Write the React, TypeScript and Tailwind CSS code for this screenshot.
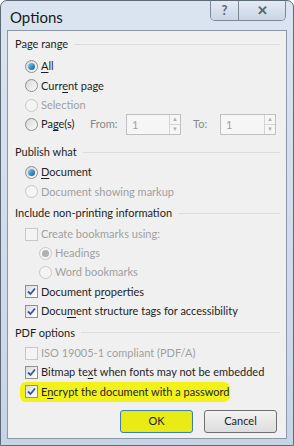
import type { ReactNode } from 'react';

const font = { fontFamily: 'Lato, "Open Sans", sans-serif' };

function Radio({ checked, disabled }: { checked?: boolean; disabled?: boolean }) {
  return (
    <span
      className={`relative inline-flex h-[13px] w-[13px] shrink-0 items-center justify-center rounded-full border ${
        disabled ? 'border-[#c8c8c8] bg-[#f4f4f4]' : 'border-[#8e8f8f] bg-gradient-to-br from-[#d8d8d8] to-[#fbfbfb]'
      }`}
    >
      {checked && (
        <span
          className={`h-[7px] w-[7px] rounded-full ${
            disabled ? 'bg-[#b0b0b0]' : 'bg-gradient-to-br from-[#7fd0ff] to-[#0b5a8f]'
          }`}
        />
      )}
    </span>
  );
}

function Check({ checked, disabled }: { checked?: boolean; disabled?: boolean }) {
  return (
    <span
      className={`inline-flex h-[13px] w-[13px] shrink-0 items-center justify-center border ${
        disabled ? 'border-[#c8c8c8] bg-[#f4f4f4]' : 'border-[#8e8f8f] bg-gradient-to-br from-[#dcdcdc] to-[#ffffff]'
      }`}
    >
      {checked && (
        <svg width="9" height="9" viewBox="0 0 9 9">
          <path d="M1 4.5 L3.5 7 L8 1.5" fill="none" stroke="#3a55a0" strokeWidth="1.8" />
        </svg>
      )}
    </span>
  );
}

function Row({ indent = 'pl-[10px]', disabled, children, control }: { indent?: string; disabled?: boolean; children: ReactNode; control: ReactNode }) {
  return (
    <div className={`flex h-[19.25px] items-center gap-[3px] whitespace-nowrap ${indent} ${disabled ? 'text-[#a0a0a0]' : 'text-[#1e1e1e]'}`}>
      {control}
      <span>{children}</span>
    </div>
  );
}

function Header({ children, first }: { children: ReactNode; first?: boolean }) {
  return (
    <div className={`flex h-[22px] items-center gap-[6px] whitespace-nowrap text-[#1e1e1e] ${first ? '' : 'mt-[1px]'}`}>
      <span>{children}</span>
      <span className="mr-[6px] h-px flex-1 bg-[#dcdcdc]" />
    </div>
  );
}

function Spin({ w }: { w: string }) {
  return (
    <div className={`flex h-[21px] ${w} border border-[#c0c0c0] bg-[#f6f6f6]`}>
      <span className="flex-1 pl-[5px] leading-[19px] text-[#a0a0a0]">1</span>
      <div className="flex w-[11px] flex-col border-l border-[#d4d4d4]">
        <span className="flex flex-1 items-center justify-center border-b border-[#d4d4d4] text-[6px] leading-none text-[#b0b0b0]">▲</span>
        <span className="flex flex-1 items-center justify-center text-[6px] leading-none text-[#b0b0b0]">▼</span>
      </div>
    </div>
  );
}

const u = (s: string) => <span className="underline underline-offset-2">{s}</span>;

export default function App() {
  return (
    <div className="h-[446px] w-[294px] overflow-hidden bg-white text-[11px]" style={font}>
      <div className="flex h-full w-full flex-col rounded-t-[7px] border border-[#5f6a78] bg-gradient-to-b from-[#dbe5f1] to-[#c6d5e6]">
        <div className="flex h-[29px] items-start">
          <span className="pl-[9px] pt-[5px] text-[15px] text-[#1a1a1a]">Options</span>
          <div className="ml-auto mr-[7px] flex h-[20px] overflow-hidden rounded-b-[5px] border border-t-0 border-[#7d8794]">
            <span className="flex w-[28px] items-center justify-center border-r border-[#7d8794] bg-gradient-to-b from-[#e4ebf4] to-[#c9d6e6] text-[13px] font-bold text-[#5b6573]">?</span>
            <span className="flex w-[46px] items-center justify-center bg-gradient-to-b from-[#e4ebf4] to-[#c9d6e6] text-[13px] font-bold text-[#5b6573]">✕</span>
          </div>
        </div>
        <div className="mx-[6px] mb-[6px] flex flex-1 flex-col border border-[#8d98a6] bg-[#f0f0f0] pl-[7px] pt-[2px]">
          <Header first>Page range</Header>
          <div className="h-[2px]" />
          <Row control={<Radio checked />}>{u('A')}ll</Row>
          <Row control={<Radio />}>Curr{u('e')}nt page</Row>
          <Row disabled control={<Radio disabled />}>Selection</Row>
          <div className="flex h-[19.25px] items-center whitespace-nowrap pl-[10px] text-[#1e1e1e]">
            <Radio />
            <span className="ml-[3px] w-[49px]">Pa{u('g')}e(s)</span>
            <span className="w-[36px] text-[#8a8a8a]">From:</span>
            <Spin w="w-[55px]" />
            <span className="ml-[12px] w-[27px] text-[#8a8a8a]">To:</span>
            <Spin w="w-[56px]" />
          </div>
          <div className="h-[6px]" />
          <Header>Publish what</Header>
          <Row control={<Radio checked />}>{u('D')}ocument</Row>
          <Row disabled control={<Radio disabled />}>Document showing markup</Row>
          <Header>Include non-printing information</Header>
          <Row disabled control={<Check disabled />}>Create bookmarks using:</Row>
          <Row indent="pl-[24px]" disabled control={<Radio checked disabled />}>Headings</Row>
          <Row indent="pl-[24px]" disabled control={<Radio disabled />}>Word bookmarks</Row>
          <Row control={<Check checked />}>Document p{u('r')}operties</Row>
          <Row control={<Check checked />}>Docu{u('m')}ent structure tags for accessibility</Row>
          <Header>PDF options</Header>
          <Row disabled control={<Check disabled />}>ISO 19005-1 compliant (PDF/A)</Row>
          <Row control={<Check checked />}>Bitmap te{u('x')}t when fonts may not be embedded</Row>
          <div className="ml-[5px] w-[210px] rounded-[6px] bg-[#f2f21a]">
            <Row indent="pl-[5px]" control={<Check checked />}>E{u('n')}crypt the document with a password</Row>
          </div>
          <div className="mt-[8px] flex gap-[11px] pl-[105px]">
            <span className="flex h-[23px] w-[73px] items-center justify-center rounded-[3px] border border-[#3c7fb1] bg-[#eaea14] text-[#1e1e1e] shadow-[inset_0_0_0_1px_#d4e83a]">OK</span>
            <span className="flex h-[23px] w-[73px] items-center justify-center rounded-[3px] border border-[#707070] bg-gradient-to-b from-[#f2f2f2] to-[#dddddd] text-[#1e1e1e]">Cancel</span>
          </div>
        </div>
      </div>
    </div>
  );
}
